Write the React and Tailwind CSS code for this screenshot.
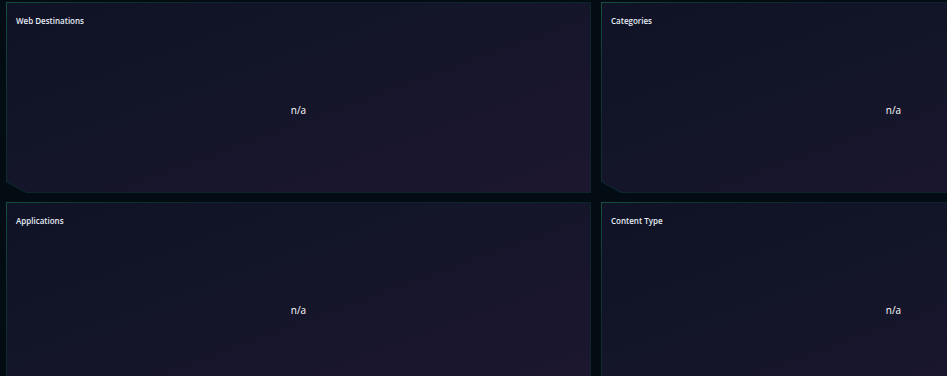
import React from "react";

const cut = {
  clipPath:
    "polygon(0 0, 100% 0, 100% 100%, 20px 100%, 0 calc(100% - 11px))",
};
const cutInner = {
  clipPath:
    "polygon(0 0, 100% 0, 100% 100%, 19.5px 100%, 0 calc(100% - 10.5px))",
};

function Panel({ title }) {
  return (
    <div
      className="h-[191px] p-px bg-[linear-gradient(135deg,#145040_0%,#0f3433_10%,#0c252d_30%,#0c242c_100%)]"
      style={cut}
    >
      <div
        className="h-full flex flex-col bg-[linear-gradient(160deg,#0f1325_0%,#131529_40%,#1d1630_100%)]"
        style={cutInner}
      >
        <div className="pl-[9px] pt-[12px] h-[25px] text-[8px] leading-[12px] font-semibold text-[#e6ecf5] font-['Open_Sans',sans-serif]">
          {title}
        </div>
        <div className="flex-1 flex items-center justify-center text-[10px] text-white font-['Open_Sans',sans-serif]">
          n/a
        </div>
      </div>
    </div>
  );
}

export default function App() {
  return (
    <div className="w-[947px] h-[376px] overflow-hidden bg-[#030b13] pt-[2px] pl-[6px]">
      <div className="grid grid-cols-[585px_585px] auto-rows-[191px] gap-x-[10px] gap-y-[9px]">
        <Panel title="Web Destinations" />
        <Panel title="Categories" />
        <Panel title="Applications" />
        <Panel title="Content Type" />
      </div>
    </div>
  );
}
